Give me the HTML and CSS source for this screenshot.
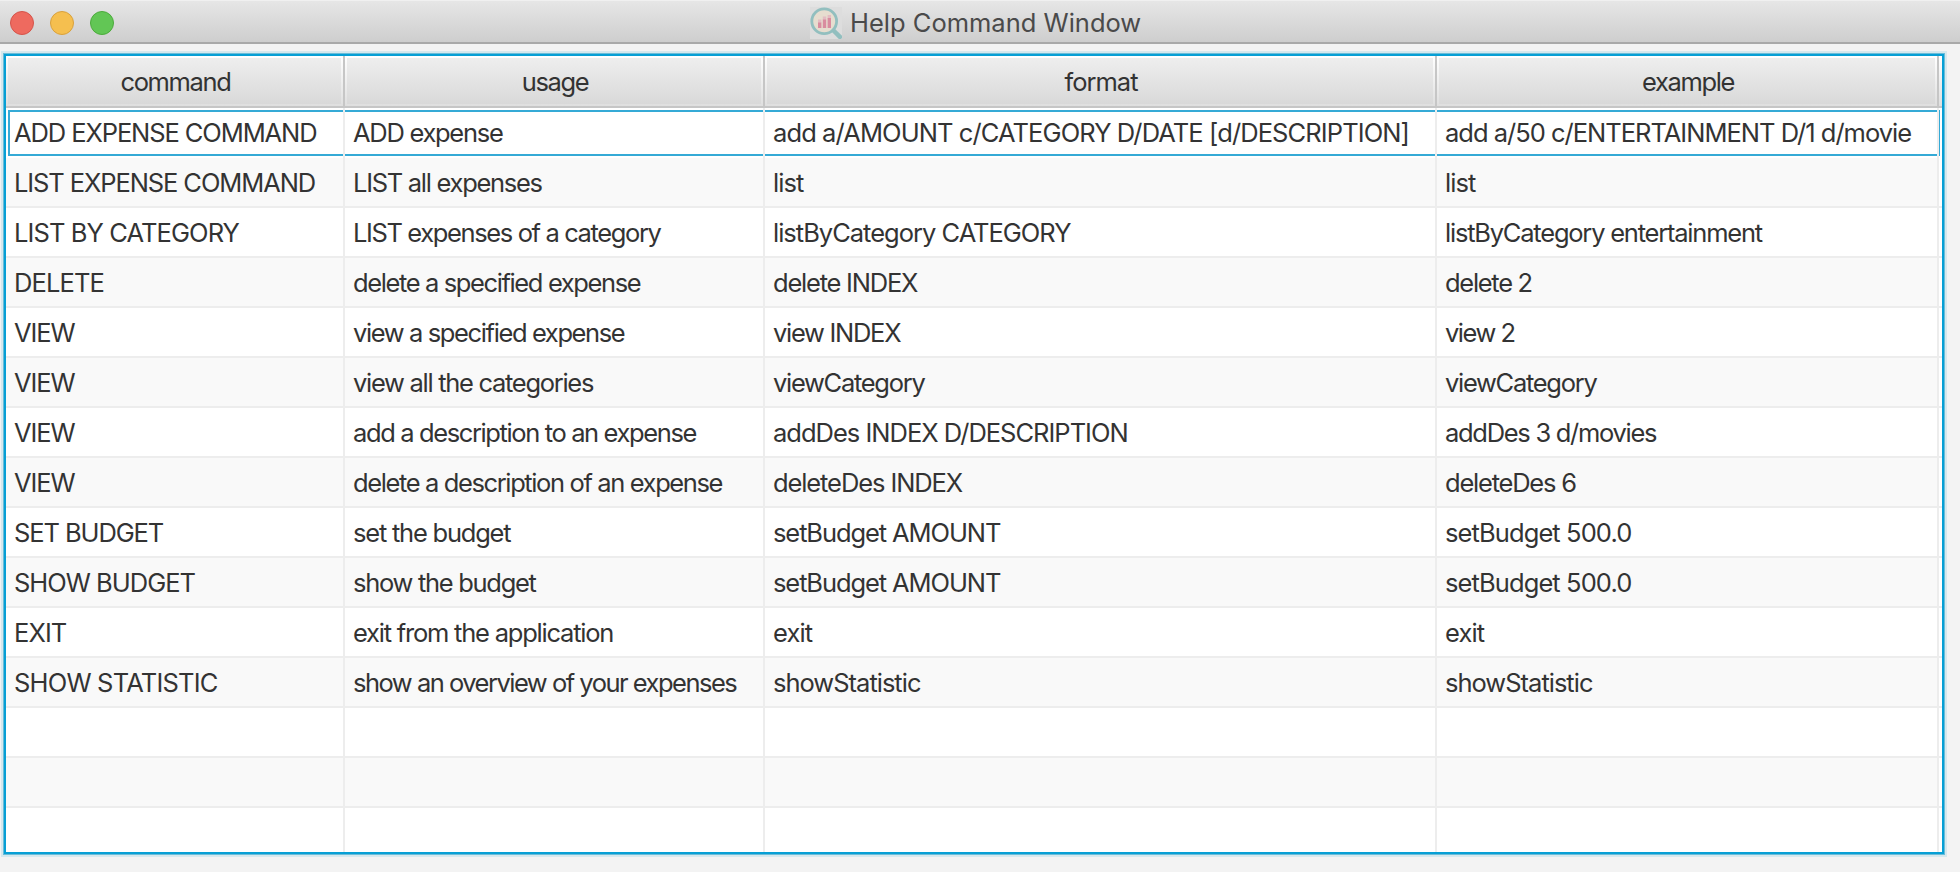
FILE: index.html
```html
<!DOCTYPE html>
<html lang="en">
<head>
<meta charset="utf-8">
<title>Help Command Window</title>
<link rel="stylesheet" href="styles.css">
</head>
<body>
<header class="titlebar">
  <div class="lights"><i class="light red"></i><i class="light yellow"></i><i class="light green"></i></div>
  <svg class="app-icon" viewBox="0 0 32 32" width="32" height="32">
    <rect width="32" height="32" fill="#dddddd"/>
    <path d="M23 23l8.500 8.500" stroke="#92bfbf" stroke-width="4.5"/>
    <circle cx="14.2" cy="14.2" r="12.4" fill="#e6ddcf" stroke="#92bfbf" stroke-width="2.8"/>
    <path d="M8 12.500h3.400v3.500H8zM12.800 9.500h3.400v3.500h-3.400zM17.600 8h3.400v3.500h-3.400z" fill="#e3bcc2"/>
    <path d="M8 15.500h3.400V21H8zM12.800 12.500h3.400V21h-3.400zM17.600 11h3.400v10h-3.400z" fill="#d98c9f"/>
  </svg>
  <h1 class="title">Help Command Window</h1>
</header>
<main class="table">
  <div class="row head"><div class="th">command</div><div class="th">usage</div><div class="th wide">format</div><div class="th">example</div><div class="th filler"></div></div>
  <div class="row focused"><div class="td t2">ADD EXPENSE COMMAND</div><div class="td t4">ADD expense</div><div class="td">add a/AMOUNT c/CATEGORY D/DATE [d/DESCRIPTION]</div><div class="td t1">add a/50 c/ENTERTAINMENT D/1 d/movie</div><div class="td filler"></div></div>
  <div class="row"><div class="td t2">LIST EXPENSE COMMAND</div><div class="td t4">LIST all expenses</div><div class="td">list</div><div class="td">list</div><div class="td filler"></div></div>
  <div class="row"><div class="td">LIST BY CATEGORY</div><div class="td t5">LIST expenses of a category</div><div class="td t1">listByCategory CATEGORY</div><div class="td t3">listByCategory entertainment</div><div class="td filler"></div></div>
  <div class="row"><div class="td">DELETE</div><div class="td t5">delete a specified expense</div><div class="td t3">delete INDEX</div><div class="td t4">delete 2</div><div class="td filler"></div></div>
  <div class="row"><div class="td t2">VIEW</div><div class="td t5">view a specified expense</div><div class="td t4">view INDEX</div><div class="td t6">view 2</div><div class="td filler"></div></div>
  <div class="row"><div class="td t2">VIEW</div><div class="td t4">view all the categories</div><div class="td t4">viewCategory</div><div class="td t4">viewCategory</div><div class="td filler"></div></div>
  <div class="row"><div class="td t2">VIEW</div><div class="td t5">add a description to an expense</div><div class="td t1">addDes INDEX D/DESCRIPTION</div><div class="td t4">addDes 3 d/movies</div><div class="td filler"></div></div>
  <div class="row"><div class="td t2">VIEW</div><div class="td t5">delete a description of an expense</div><div class="td t2">deleteDes INDEX</div><div class="td t3">deleteDes 6</div><div class="td filler"></div></div>
  <div class="row"><div class="td t2">SET BUDGET</div><div class="td t3">set the budget</div><div class="td t2">setBudget AMOUNT</div><div class="td">setBudget 500.0</div><div class="td filler"></div></div>
  <div class="row"><div class="td t1">SHOW BUDGET</div><div class="td t4">show the budget</div><div class="td t2">setBudget AMOUNT</div><div class="td">setBudget 500.0</div><div class="td filler"></div></div>
  <div class="row"><div class="td">EXIT</div><div class="td t3">exit from the application</div><div class="td">exit</div><div class="td">exit</div><div class="td filler"></div></div>
  <div class="row"><div class="td wide">SHOW STATISTIC</div><div class="td t6">show an overview of your expenses</div><div class="td t1">showStatistic</div><div class="td t1">showStatistic</div><div class="td filler"></div></div>
  <div class="row"><div class="td"></div><div class="td"></div><div class="td"></div><div class="td"></div><div class="td filler"></div></div>
  <div class="row"><div class="td"></div><div class="td"></div><div class="td"></div><div class="td"></div><div class="td filler"></div></div>
  <div class="row"><div class="td"></div><div class="td"></div><div class="td"></div><div class="td"></div><div class="td filler"></div></div>
</main>
</body>
</html>
```

FILE: styles.css
```css
* { box-sizing: border-box; }
body {
  margin: 0;
  height: 872px;
  overflow: hidden;
  background: #f3f3f3;
  font-family: Inter, "Liberation Sans", sans-serif;
  color: #333;
}
.titlebar {
  display: grid;
  grid-template-columns: 810px 32px 1fr;
  align-items: center;
  height: 44px;
  padding-top: 1px;
  background: linear-gradient(#e6e6e6, #cecece);
  border-top: 1px solid #f0f0f0;
  border-bottom: 2px solid #a9a9a9;
}
.lights { display: flex; gap: 16px; padding-left: 10px; }
.light { width: 24px; height: 24px; border-radius: 50%; border: 1px solid; }
.red { background: #ee6a5f; border-color: #d5544a; }
.yellow { background: #f5bf4f; border-color: #d9a13c; }
.green { background: #62c655; border-color: #4cab3c; }
.app-icon { display: block; }
.title {
  margin: 0 0 0 8px;
  padding-top: 1px;
  font-size: 25.5px;
  font-weight: 400;
  line-height: 40px;
  color: #4a4a4a;
  white-space: nowrap;
}
.table {
  width: 1940px;
  height: 800px;
  margin: 10px 0 0 4px;
  overflow: hidden;
  background: #fff;
  border: 2px solid #069fd5;
  box-shadow: 0 0 0 1px #69bcd8, 0 0 0 3px #d5e8ee;
}
.row {
  display: grid;
  grid-template-columns: 339px 420px 672px 502px 3px;
  height: 50px;
}
.row:nth-child(odd) .td { background: #f9f9f9; }
.row:nth-child(odd) .td.filler { background: #fff; }
.td {
  padding: 2px 0 0 8px;
  border-right: 2px solid #ededed;
  border-bottom: 2px solid #ededed;
  font-size: 25.5px;
  line-height: 46px;
  letter-spacing: -0.9px;
  white-space: nowrap;
  overflow: hidden;
}
.row .filler { padding: 0; border-right: 0; }
.head { height: 52px; }
.th {
  padding: 1px 0 0 2px;
  border: solid #c6c6c6;
  border-width: 0 2px 2px 0;
  background: linear-gradient(#eee, #d9d9d9) 2px 2px / calc(100% - 4px) 46px no-repeat, linear-gradient(#fff, #dfdfdf);
  font-size: 25.5px;
  line-height: 49px;
  letter-spacing: -1.35px;
  text-align: center;
}
.th.wide { letter-spacing: -1px; }

/* tracking steps */
.td.wide { letter-spacing: -0.8px; }
.t1 { letter-spacing: -1px; }
.t2 { letter-spacing: -1.1px; }
.t3 { letter-spacing: -1.22px; }
.t4 { letter-spacing: -1.29px; }
.t5 { letter-spacing: -1.38px; }
.t6 { letter-spacing: -1.5px; }

.focused .td {
  border-bottom: 0;
  background: linear-gradient(#35aad6, #35aad6) 0 2px / 100% 2px no-repeat, linear-gradient(#35aad6, #35aad6) 0 46px / 100% 2px no-repeat;
  background-clip: padding-box;
}
.focused .td:first-child {
  background: linear-gradient(#35aad6, #35aad6) 2px 2px / 100% 2px no-repeat, linear-gradient(#35aad6, #35aad6) 2px 46px / 100% 2px no-repeat, linear-gradient(#35aad6, #35aad6) 2px 2px / 2px 46px no-repeat;
  background-clip: padding-box;
}
.focused .td.filler {
  background: linear-gradient(#35aad6, #35aad6) 0 2px / 1px 46px no-repeat;
}
```
